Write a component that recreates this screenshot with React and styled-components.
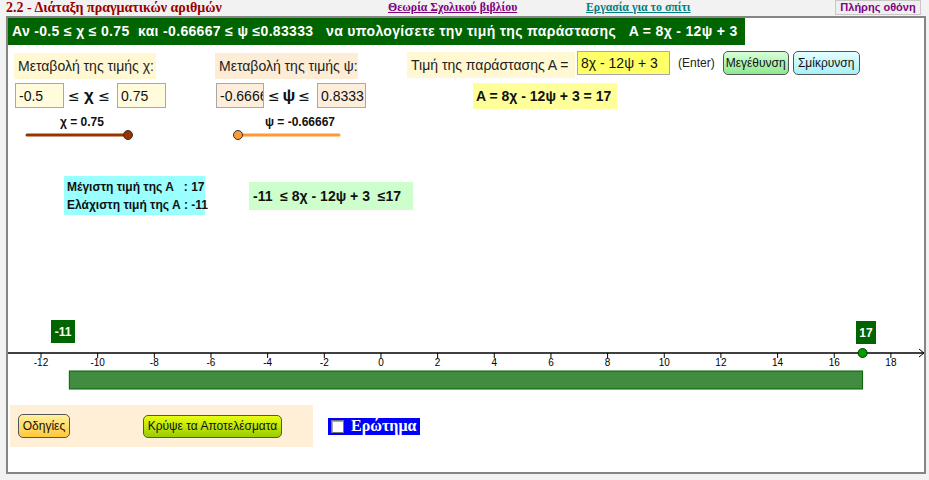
import React from 'react'
import styled, { createGlobalStyle } from 'styled-components'

const GlobalStyle = createGlobalStyle`
  body {
    margin: 0;
    background: #f2f2f2;
    font-family: "Liberation Sans", Arial, sans-serif;
  }
`

const Page = styled.div`
  width: 929px;
  height: 480px;
  overflow: hidden;
`

const TopBar = styled.div`
  display: flex;
  align-items: flex-start;
  height: 16px;
  padding-left: 6px;
`

const Title = styled.div`
  width: 382px;
  font-family: "Liberation Serif", "Times New Roman", serif;
  font-weight: 700;
  font-size: 14px;
  line-height: 15px;
  color: #990000;
`

const TopLink = styled.a`
  width: ${p => p.$w}px;
  margin-top: 1px;
  font-family: "Liberation Serif", "Times New Roman", serif;
  font-weight: 700;
  font-size: 11.8px;
  line-height: 12px;
  color: ${p => p.$color};
  text-decoration: underline;
`

const FullScreen = styled.div`
  margin-left: auto;
  margin-right: 8px;
  width: 86px;
  height: 15px;
  box-sizing: border-box;
  border: 1px solid #c8c8c8;
  background: #efefef;
  color: #800080;
  font-size: 11px;
  font-weight: 700;
  line-height: 13px;
  text-align: center;
`

const Frame = styled.div`
  margin-left: 6px;
  width: 920px;
  height: 458px;
  box-sizing: border-box;
  border: 2px solid #858585;
  background: #fff;
`

const Canvas = styled.div`
  display: flex;
  flex-direction: column;
  width: 916px;
  height: 454px;
`

const Banner = styled.div`
  width: 737px;
  height: 27px;
  background: #006400;
  color: #fff;
  font-weight: 700;
  font-size: 14px;
  line-height: 27px;
  padding-left: 4px;
  box-sizing: border-box;
  white-space: pre;
  letter-spacing: 0.33px;
`

const Controls = styled.div`
  display: flex;
  align-items: flex-start;
  margin-top: 6px;
  padding-left: 6px;
`

const VarGroup = styled.div`
  display: flex;
  flex-direction: column;
  align-items: flex-start;
  width: ${p => p.$w}px;
  padding-top: 2px;
`

const Label = styled.div`
  width: ${p => p.$w}px;
  height: 26px;
  background: ${p => p.$bg};
  box-sizing: border-box;
  padding-left: 4px;
  font-size: 14px;
  line-height: 26px;
  color: #222;
  white-space: pre;
  flex-shrink: 0;
`

const InputRow = styled.div`
  display: flex;
  align-items: center;
  margin-top: 4px;
  margin-left: 1px;
`

const Field = styled.input`
  width: ${p => p.$w}px;
  height: ${p => p.$h || 25}px;
  margin: 0;
  background: ${p => p.$bg};
  border: 1px solid #a8a8a8;
  border-radius: 0;
  outline: none;
  box-sizing: border-box;
  padding: 0 0 0 3px;
  font-family: "Liberation Sans", Arial, sans-serif;
  font-size: 14px;
  color: #111;
  flex-shrink: 0;
`

const Relation = styled.div`
  display: flex;
  align-items: center;
  justify-content: space-between;
  width: 42px;
  padding: 0 7px 0 4px;
  font-family: "DejaVu Sans", sans-serif;
  font-size: 14px;
  color: #111;

  b {
    font-family: "Liberation Sans", Arial, sans-serif;
    font-size: 17px;
  }
`

const SliderBox = styled.div`
  display: flex;
  flex-direction: column;
  align-items: center;
  margin-top: 7px;
  margin-left: ${p => p.$dx}px;
  width: 102px;
`

const SliderCaption = styled.div`
  font-size: 12px;
  font-weight: 700;
  line-height: 14px;
  color: #111;
  white-space: nowrap;
  transform: translateX(${p => p.$shift || 0}px);
`

const ValueGroup = styled.div`
  display: flex;
  flex-direction: column;
`

const ValueRow = styled.div`
  display: flex;
  align-items: flex-start;
`

const ValueLabel = styled(Label)`
  margin-top: 1px;
  margin-right: 2px;
`

const SmallText = styled.div`
  margin: 0 8px;
  font-size: 12px;
  line-height: 24px;
  color: #222;
`

const ButtonPair = styled.div`
  display: flex;
  gap: 4px;
`

const Button = styled.div`
  width: ${p => p.$w}px;
  height: ${p => p.$h}px;
  box-sizing: border-box;
  border: 1px solid #555;
  border-radius: 5px;
  background: linear-gradient(${p => p.$from}, ${p => p.$to});
  font-size: 12px;
  line-height: ${p => p.$h - 2}px;
  text-align: center;
  color: #111;
  white-space: nowrap;
`

const InfoBox = styled.div`
  width: ${p => p.$w}px;
  height: ${p => p.$h}px;
  box-sizing: border-box;
  background: ${p => p.$bg};
  font-weight: 700;
  font-size: ${p => p.$size}px;
  color: #111;
  display: flex;
  flex-direction: column;
  justify-content: center;
  padding-left: ${p => p.$pad}px;
  white-space: pre;
  line-height: 18px;
  margin-top: ${p => p.$mt || 0}px;
  margin-left: ${p => p.$ml || 0}px;
`

const InfoRow = styled.div`
  display: flex;
  align-items: center;
  gap: 44px;
  margin-top: 35px;
  padding-left: 56px;
`

const ChartSvg = styled.svg`
  display: block;
  margin-top: 93px;
`

const BottomRow = styled.div`
  display: flex;
  align-items: center;
  gap: 15px;
  margin-top: 12px;
  padding-left: 2px;
`

const Panel = styled.div`
  display: flex;
  align-items: center;
  gap: 73px;
  width: 303px;
  height: 42px;
  box-sizing: border-box;
  padding-left: 8px;
  background: #ffefd6;
`

const Question = styled.label`
  width: 92px;
  height: 17px;
  background: #0000ff;
  color: #fff;
  display: flex;
  align-items: center;
  gap: 7px;
  padding-left: 3px;
  box-sizing: border-box;
  font-family: "Liberation Serif", "Times New Roman", serif;
  font-weight: 700;
  font-size: 16px;
`

const Box = styled.span`
  width: 11px;
  height: 11px;
  background: #fff;
  border: 1px solid #777;
  box-shadow: inset 1px 1px 0 #aaa;
`

const Slider = ({ color, knobAt }) => (
  <svg width="102" height="12" style={{ overflow: 'visible' }}>
    <line x1="0" y1="6" x2="101" y2="6" stroke={color} strokeWidth="3" strokeLinecap="round" />
    <circle cx={knobAt} cy="6" r="4.5" fill={color} stroke="#333" strokeWidth="1" />
  </svg>
)

const x0 = 33
const unit = 28.33
const ticks = [-12, -10, -8, -6, -4, -2, 0, 2, 4, 6, 8, 10, 12, 14, 16, 18]
const px = v => x0 + (v + 12) * unit

const Tag = ({ x, y, w, text }) => (
  <g>
    <rect x={x} y={y} width={w} height="23" fill="#006400" />
    <text x={x + w / 2} y={y + 16} fontSize="12" fontWeight="700" textAnchor="middle" fill="#fff"
      fontFamily="Liberation Sans, Arial, sans-serif">{text}</text>
  </g>
)

// number line, axis at y = 45
const NumberLine = () => (
  <ChartSvg width="916" height="85">
    <Tag x={43} y={12} w={24} text="-11" />
    <Tag x={848} y={13} w={20} text="17" />
    <line x1="0" y1="45" x2="916" y2="45" stroke="#000" strokeWidth="1.5" />
    <path d="M911 41 L916 45 L911 49" fill="none" stroke="#000" strokeWidth="1" />
    {ticks.map(t => (
      <g key={t}>
        <line x1={px(t)} y1="45" x2={px(t)} y2="50" stroke="#000" strokeWidth="1" />
        <text x={px(t)} y="58" fontSize="10" textAnchor="middle" fontFamily="Liberation Sans, Arial, sans-serif" fill="#000">{t}</text>
      </g>
    ))}
    <rect x={px(-11)} y="63" width={28 * unit} height="18" fill="#418c41" stroke="#006400" strokeWidth="1" />
    <circle cx={px(17)} cy="45" r="4.5" fill="#00a000" stroke="#003300" strokeWidth="1" />
  </ChartSvg>
)

const App = () => {
  return (
    <Page>
      <GlobalStyle />
      <TopBar>
        <Title>2.2 - Διάταξη πραγματικών αριθμών</Title>
        <TopLink $w={198} $color="#800080">Θεωρία Σχολικού βιβλίου</TopLink>
        <TopLink $w={200} $color="#008080">Εργασία για το σπίτι</TopLink>
        <FullScreen>Πλήρης οθόνη</FullScreen>
      </TopBar>
      <Frame>
        <Canvas>
          <Banner>{'Αν -0.5 ≤ χ ≤ 0.75  και -0.66667 ≤ ψ ≤0.83333   να υπολογίσετε την τιμή της παράστασης   A = 8χ - 12ψ + 3'}</Banner>

          <Controls>
            <VarGroup $w={201}>
              <Label $w={142} $bg="#fff8d2">Μεταβολή της τιμής χ:</Label>
              <InputRow>
                <Field $w={49} $bg="#fffbdc" defaultValue="-0.5" readOnly />
                <Relation>≤ <b>χ</b> ≤</Relation>
                <Field $w={49} $bg="#fffbdc" defaultValue="0.75" readOnly />
              </InputRow>
              <SliderBox $dx={13}>
                <SliderCaption $shift={4}>χ = 0.75</SliderCaption>
                <Slider color="#993300" knobAt={101} />
              </SliderBox>
            </VarGroup>

            <VarGroup $w={192}>
              <Label $w={143} $bg="#fdecd6">Μεταβολή της τιμής ψ:</Label>
              <InputRow>
                <Field $w={48} $bg="#fdeedb" defaultValue="-0.66667" readOnly />
                <Relation>≤ <b>ψ</b> ≤</Relation>
                <Field $w={49} $bg="#fdeedb" defaultValue="0.8333" readOnly />
              </InputRow>
              <SliderBox $dx={23}>
                <SliderCaption $shift={11}>ψ = -0.66667</SliderCaption>
                <Slider color="#ff9933" knobAt={0} />
              </SliderBox>
            </VarGroup>

            <ValueGroup>
              <ValueRow>
                <ValueLabel $w={168} $bg="#fff8d2">Τιμή της παράστασης Α =</ValueLabel>
                <Field $w={93} $h={24} $bg="#ffff66" defaultValue="8χ - 12ψ + 3" readOnly />
                <SmallText>(Enter)</SmallText>
                <ButtonPair>
                  <Button $w={66} $h={24} $from="#d8ffd8" $to="#8fe88f">Μεγέθυνση</Button>
                  <Button $w={67} $h={24} $from="#e4ffff" $to="#a8f0f8">Σμίκρυνση</Button>
                </ButtonPair>
              </ValueRow>
              <InfoBox $w={144} $h={26} $bg="#ffff99" $size={14} $pad={3} $mt={5} $ml={66}>A = 8χ - 12ψ + 3 = 17</InfoBox>
            </ValueGroup>
          </Controls>

          <InfoRow>
            <InfoBox $w={141} $h={39} $bg="#99ffff" $size={12} $pad={3}>
              <div>{'Μέγιστη τιμή της Α   : 17'}</div>
              <div>{'Ελάχιστη τιμή της Α : -11'}</div>
            </InfoBox>
            <InfoBox $w={164} $h={28} $bg="#ccffcc" $size={14} $pad={4}>{'-11  ≤ 8χ - 12ψ + 3  ≤17'}</InfoBox>
          </InfoRow>

          <NumberLine />

          <BottomRow>
            <Panel>
              <Button $w={52} $h={24} $from="#fff0a0" $to="#ffc838">Οδηγίες</Button>
              <Button $w={139} $h={23} $from="#e8ff10" $to="#99cc00">Κρύψε τα Αποτελέσματα</Button>
            </Panel>
            <Question><Box />Ερώτημα</Question>
          </BottomRow>
        </Canvas>
      </Frame>
    </Page>
  )
}

export default App
